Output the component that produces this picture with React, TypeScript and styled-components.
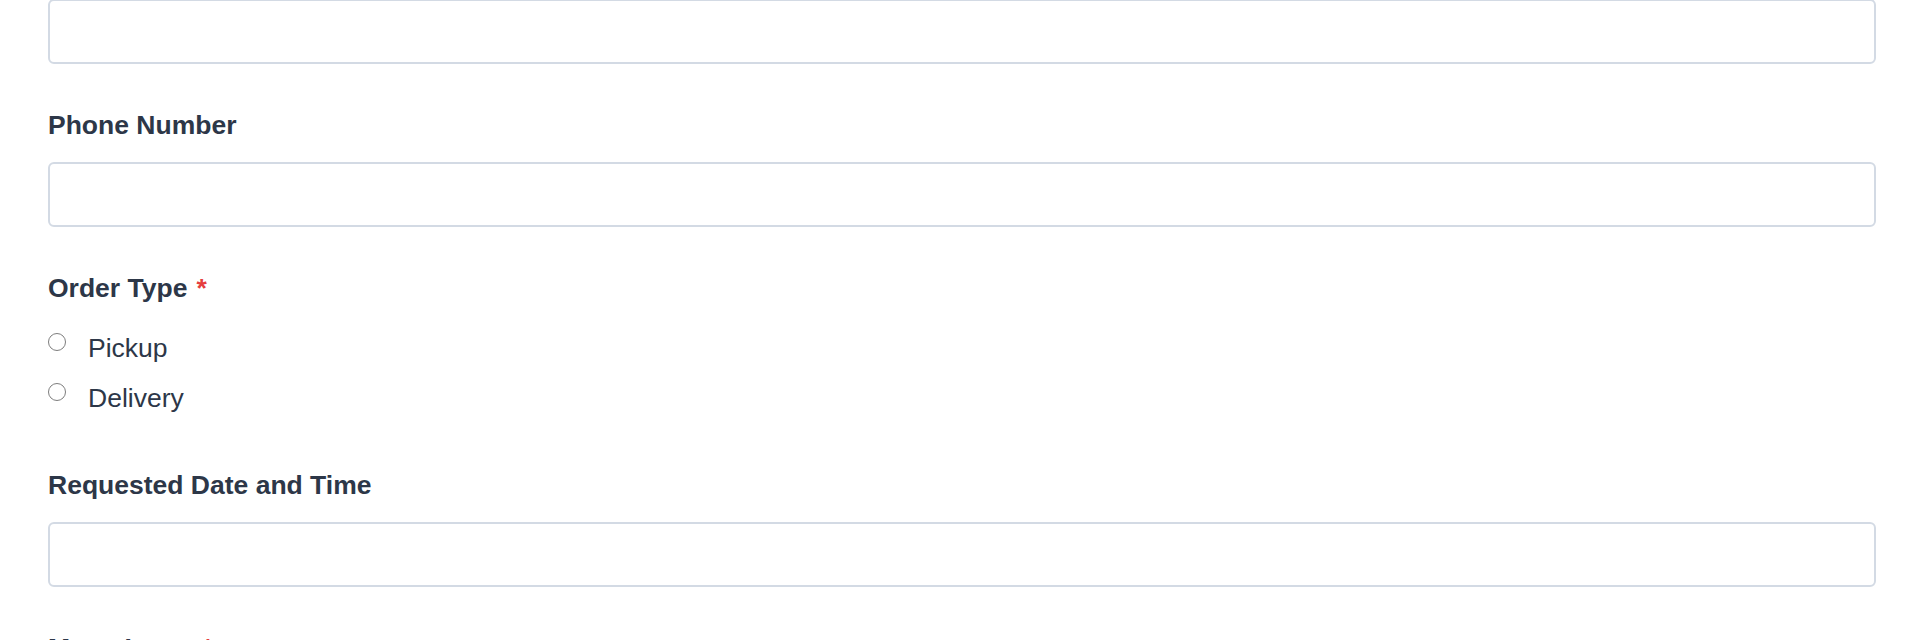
import styled, { createGlobalStyle } from "styled-components";

const GlobalStyle = createGlobalStyle`
  body {
    margin: 0;
    background: #ffffff;
    font-family: "Liberation Sans", Arial, sans-serif;
    color: #2d3748;
  }
`;

const Page = styled.div`
  margin-top: -1px;
  padding: 0 44px 0 48px;
`;

const Form = styled.form`
  display: flex;
  flex-direction: column;
`;

const Field = styled.div`
  display: flex;
  flex-direction: column;
  margin-bottom: 42px;
`;

const Label = styled.label`
  font-size: 26.5px;
  line-height: 38px;
  font-weight: 700;
  color: #2d3748;
  margin-bottom: 18px;
`;

const Required = styled.span`
  color: #e53e3e;
  margin-left: 9px;
`;

const Input = styled.input`
  box-sizing: border-box;
  width: 100%;
  height: 65px;
  border: 2px solid #d3dae4;
  border-radius: 6px;
  background: #ffffff;
  padding: 0 16px;
  font: inherit;
  font-size: 26px;
  outline: none;
`;

const Options = styled.div`
  display: flex;
  flex-direction: column;
  gap: 12px;
  padding: 4px 0 7px;
`;

const Option = styled.label`
  display: flex;
  align-items: flex-start;
  font-size: 26.5px;
  line-height: 38px;
  color: #2d3748;
  cursor: pointer;
`;

const Radio = styled.input.attrs({ type: "radio" })`
  appearance: none;
  box-sizing: border-box;
  width: 18px;
  height: 18px;
  margin: 4px 22px 0 0;
  border: 1.5px solid #7d7d7d;
  border-radius: 50%;
  background: #ffffff;
  flex-shrink: 0;
`;

export default function App() {
  return (
    <>
      <GlobalStyle />
      <Page>
        <Form>
          <Field>
            <Input type="text" />
          </Field>
          <Field>
            <Label>Phone Number</Label>
            <Input type="tel" />
          </Field>
          <Field>
            <Label>
              Order Type<Required>*</Required>
            </Label>
            <Options>
              <Option>
                <Radio name="orderType" value="pickup" />
                Pickup
              </Option>
              <Option>
                <Radio name="orderType" value="delivery" />
                Delivery
              </Option>
            </Options>
          </Field>
          <Field>
            <Label>Requested Date and Time</Label>
            <Input type="text" />
          </Field>
          <Field>
            <Label>
              Menu Items<Required>*</Required>
            </Label>
          </Field>
        </Form>
      </Page>
    </>
  );
}
